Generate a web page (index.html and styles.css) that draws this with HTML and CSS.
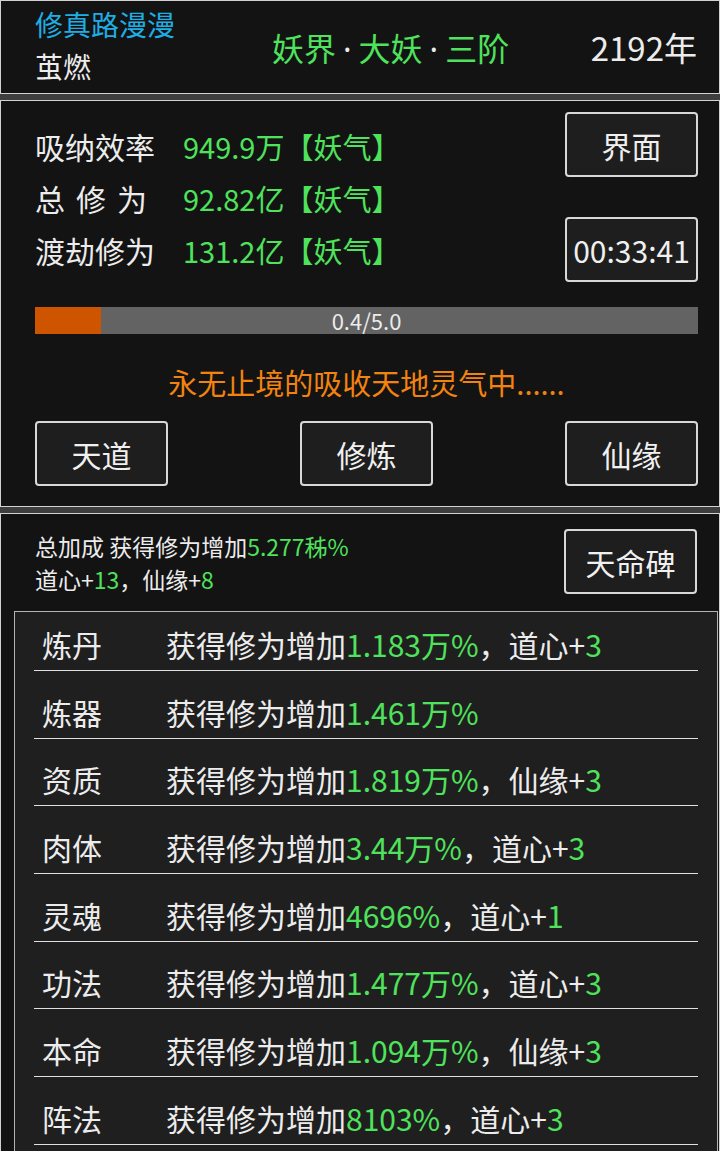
FILE: index.html
```html
<!DOCTYPE HTML>
<html>

<head>
    <title>修真路漫漫</title>
    <meta name="viewport" content="width=device-width, initial-scale=1">
    <link rel="stylesheet" href="styles.css">
</head>

<body>
    <div class="panel topbar">
        <div class="who">
            <div class="game">修真路漫漫</div>
            <div class="name">茧燃</div>
        </div>
        <div class="realm">妖界<span class="dot">·</span>大妖<span class="dot">·</span>三阶</div>
        <div class="year">2192年</div>
    </div>

    <div class="panel main">
        <div class="top">
            <div class="stats">
                <div class="stat"><span class="label">吸纳效率</span><span class="green">949.9万【妖气】</span></div>
                <div class="stat"><span class="label spaced">总修为</span><span class="green">92.82亿【妖气】</span></div>
                <div class="stat"><span class="label">渡劫修为</span><span class="green">131.2亿【妖气】</span></div>
            </div>
            <div class="side">
                <button class="button">界面</button>
                <button class="button timer">00:33:41</button>
            </div>
        </div>
        <div class="bar">
            <div class="fill" style="width: 10%"></div>
            <span class="bar-text">0.4/5.0</span>
        </div>
        <p class="status">永无止境的吸收天地灵气中......</p>
        <div class="actions">
            <button class="button">天道</button>
            <button class="button">修炼</button>
            <button class="button">仙缘</button>
        </div>
    </div>

    <div class="panel bonus">
        <div class="bonus-head">
            <div class="total">
                <div>总加成 获得修为增加<span class="green">5.277秭%</span></div>
                <div>道心+<span class="green">13</span>，仙缘+<span class="green">8</span></div>
            </div>
            <button class="button">天命碑</button>
        </div>
        <div class="list">
            <div class="row"><span class="kind">炼丹</span><span>获得修为增加<span class="green">1.183万%</span>，道心+<span class="green">3</span></span></div>
            <div class="row"><span class="kind">炼器</span><span>获得修为增加<span class="green">1.461万%</span></span></div>
            <div class="row"><span class="kind">资质</span><span>获得修为增加<span class="green">1.819万%</span>，仙缘+<span class="green">3</span></span></div>
            <div class="row"><span class="kind">肉体</span><span>获得修为增加<span class="green">3.44万%</span>，道心+<span class="green">3</span></span></div>
            <div class="row"><span class="kind">灵魂</span><span>获得修为增加<span class="green">4696%</span>，道心+<span class="green">1</span></span></div>
            <div class="row"><span class="kind">功法</span><span>获得修为增加<span class="green">1.477万%</span>，道心+<span class="green">3</span></span></div>
            <div class="row"><span class="kind">本命</span><span>获得修为增加<span class="green">1.094万%</span>，仙缘+<span class="green">3</span></span></div>
            <div class="row"><span class="kind">阵法</span><span>获得修为增加<span class="green">8103%</span>，道心+<span class="green">3</span></span></div>
        </div>
    </div>
</body>

</html>
```

FILE: styles.css
```css
html {
    font-family: "Noto Sans CJK SC", "Noto Sans", sans-serif;
    color: #ececec;
}

body {
    margin: 0;
    background-color: #3e3e3e;
    height: 1151px;
    overflow: hidden;
}

.green {
    color: #4fe25c;
}

.panel {
    background-color: #131313;
    border: 1px solid #d2d2d2;
    margin-bottom: 6px;
}

/* top bar */
.topbar {
    display: flex;
    align-items: center;
    height: 92px;
    padding: 0 22px 0 34px;
}

.who {
    width: 237px;
}

.game {
    font-size: 28px;
    line-height: 40px;
    color: #1eaee4;
    margin-top: -4px;
}

.name {
    font-size: 28px;
    line-height: 40px;
    margin-top: 2px;
}

.realm {
    flex: 1;
    font-size: 32px;
    color: #4fe25c;
}

.dot {
    font-family: "Noto Sans", sans-serif;
    color: #ececec;
    margin: 0 7px;
}

.year {
    font-size: 33px;
}

/* main panel */
.main {
    padding: 11px 21px 20px 34px;
}

.top {
    display: flex;
    justify-content: space-between;
}

.stats {
    padding-top: 8px;
}

.stat {
    display: flex;
    font-size: 30px;
    line-height: 52px;
}

.stat .green {
    font-size: 29px;
}

.label {
    width: 148px;
}

.spaced {
    letter-spacing: 11px;
}

.side {
    display: flex;
    flex-direction: column;
    gap: 40px;
}

.button {
    width: 133px;
    height: 65px;
    padding: 0;
    font-family: inherit;
    font-size: 30px;
    color: #f0f0f0;
    background-color: #1e1e1e;
    border: 2px solid #d8d8d8;
    border-radius: 4px;
}

.bar {
    position: relative;
    height: 27px;
    margin-top: 25px;
    background-color: #636363;
    text-align: center;
}

.fill {
    position: absolute;
    left: 0;
    top: 0;
    height: 100%;
    background-color: #cf5400;
}

.bar-text {
    position: relative;
    font-size: 22px;
    line-height: 27px;
}

.status {
    margin: 28px 0 0;
    font-size: 29px;
    line-height: 40px;
    text-align: center;
    color: #f2830f;
}

.actions {
    display: flex;
    justify-content: space-between;
    margin-top: 19px;
}

/* bonus panel */
.bonus {
    padding: 15px 1px 0 13px;
    margin-bottom: 0;
    border-bottom: none;
}

.bonus-head {
    display: flex;
    justify-content: space-between;
    align-items: flex-start;
    padding: 0 21px 0 21px;
    margin-bottom: 15px;
}

.total {
    font-size: 23px;
    line-height: 33px;
    padding-top: 1px;
}

.list {
    background-color: #1f1f1f;
    border: 1px solid #b4b4b4;
    border-bottom: none;
    padding: 0 19px;
    height: 540px;
    overflow: hidden;
}

.row {
    display: flex;
    font-size: 30px;
    line-height: 40px;
    padding: 20.7px 0 6px 8px;
    border-bottom: 1px solid #e0e0e0;
}

.row:first-child {
    padding-top: 12px;
}

.kind {
    width: 124px;
}
```
